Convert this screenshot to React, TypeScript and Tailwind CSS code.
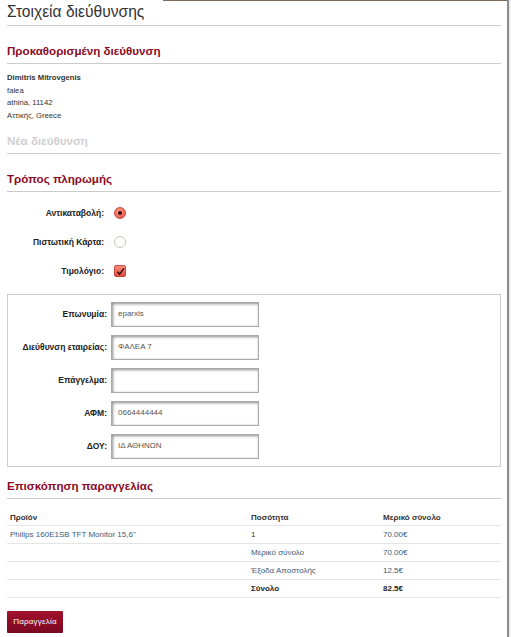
import React from "react";

const red = "text-[#8b0a24]";

function Heading({ children, muted }: { children: React.ReactNode; muted?: boolean }) {
  return (
    <div className="border-b border-[#cccccc] pb-[5px]">
      <h2 className={`text-[11.6px] font-bold leading-[14px] ${muted ? "text-[#cfcfcf]" : red}`}>{children}</h2>
    </div>
  );
}

function Field({ label, value }: { label: string; value: string }) {
  return (
    <div className="flex items-center h-[33px]">
      <label className="w-[103px] text-right pr-[4px] text-[8.5px] font-bold text-[#222]">{label}</label>
      <div className="w-[148px] h-[25px] border border-[#a9a9a9] shadow-[inset_1px_1px_3px_rgba(0,0,0,0.45)] bg-white flex items-center px-[6px] text-[8px] text-[#555]">
        {value}
      </div>
    </div>
  );
}

export default function App() {
  const rows = [
    { a: "Philips 160E1SB TFT Monitor 15,6\"", b: "1", c: "70.00€", bold: false },
    { a: "", b: "Μερικό σύνολο", c: "70.00€", bold: false },
    { a: "", b: "Έξοδα Αποστολής", c: "12.5€", bold: false },
    { a: "", b: "Σύνολο", c: "82.5€", bold: true },
  ];
  return (
    <div className="w-[511px] h-[637px] bg-white relative overflow-hidden" style={{ fontFamily: '"Liberation Sans", Arial, sans-serif' }}>
      <div className="absolute top-0 left-[163px] right-[3px] h-[1px] bg-[#7d6b55]" />
      <div className="absolute top-0 bottom-0 right-[2px] w-[2px] bg-[#8a8a8a]" />
      <div className="absolute top-0 bottom-0 right-0 w-[2px] bg-[#eeeeee]" />
      <div className="pl-[7px] pr-[10px] pt-[1px]">
        <div className="border-b border-[#cccccc] pb-[3px]">
          <h1 className="text-[15.6px] leading-[21px] text-[#333]">Στοιχεία διεύθυνσης</h1>
        </div>

        <div className="mt-[18px]">
          <Heading>Προκαθορισμένη διεύθυνση</Heading>
        </div>
        <div className="mt-[8px] text-[7.7px] leading-[12.7px] text-[#333]">
          <div className="font-bold">Dimitris Mitrovgenis</div>
          <div>falea</div>
          <div>athina, 11142</div>
          <div>Αττικής, Greece</div>
        </div>

        <div className="mt-[11px]">
          <Heading muted>Νέα διεύθυνση</Heading>
        </div>

        <div className="mt-[18px]">
          <Heading>Τρόπος πληρωμής</Heading>
        </div>

        <div className="mt-[7px] flex flex-col">
          {[
            { l: "Αντικαταβολή:", t: "radio-on" },
            { l: "Πιστωτική Κάρτα:", t: "radio-off" },
            { l: "Τιμολόγιο:", t: "check" },
          ].map((r) => (
            <div key={r.l} className="flex items-center h-[29px]">
              <span className="w-[97px] text-right text-[8.5px] font-bold text-[#222]">{r.l}</span>
              <span className="ml-[10px]">
                {r.t === "radio-on" && (
                  <span className="flex items-center justify-center w-[12px] h-[12px] rounded-full bg-[radial-gradient(circle_at_40%_35%,#ff9a8a,#e2483c)] border border-[#c94a3f]">
                    <span className="w-[4px] h-[4px] rounded-full bg-[#3a1010]" />
                  </span>
                )}
                {r.t === "radio-off" && (
                  <span className="block w-[12px] h-[12px] rounded-full bg-white border border-[#c9c5bd]" />
                )}
                {r.t === "check" && (
                  <span className="flex items-center justify-center w-[12px] h-[12px] rounded-[2px] bg-[linear-gradient(#ff8e80,#e2483c)] border border-[#c94a3f]">
                    <svg width="9" height="9" viewBox="0 0 10 10">
                      <path d="M1.5 5.2 L4 8 L8.8 1.5" fill="none" stroke="#2a0d0d" strokeWidth="1.6" />
                    </svg>
                  </span>
                )}
              </span>
            </div>
          ))}
        </div>

        <div className="mt-[8px] border border-[#cccccc] pt-[3px] pb-[3px]">
          <Field label="Επωνυμία:" value="eparxis" />
          <Field label="Διεύθυνση εταιρείας:" value="ΦΑΛΕΑ 7" />
          <Field label="Επάγγελμα:" value="" />
          <Field label="ΑΦΜ:" value="0664444444" />
          <Field label="ΔΟΥ:" value="ΙΔ ΑΘΗΝΩΝ" />
        </div>

        <div className="mt-[12px]">
          <Heading>Επισκόπηση παραγγελίας</Heading>
        </div>

        <table className="mt-[11px] w-full text-[8px] text-[#333] border-collapse">
          <thead>
            <tr className="border-b border-[#e5e5e5] h-[16px]">
              <th className="text-left font-bold pl-[3px] w-[244px]">Προϊόν</th>
              <th className="text-left font-bold w-[132px]">Ποσότητα</th>
              <th className="text-left font-bold">Μερικό σύνολο</th>
            </tr>
          </thead>
          <tbody>
            {rows.map((r, i) => (
              <tr key={i} className="border-b border-[#e5e5e5] h-[18px]">
                <td className="pl-[3px] text-[#3c5a78]">{r.a}</td>
                <td className={r.bold ? "font-bold text-[#222]" : i === 0 ? "" : "text-[#3c5a78]"}>{r.b}</td>
                <td className={r.bold ? "font-bold text-[#222]" : "text-[#3c5a78]"}>{r.c}</td>
              </tr>
            ))}
          </tbody>
        </table>

        <button className="mt-[13px] h-[22px] w-[56px] bg-[linear-gradient(#a3112e,#7a0820)] text-white text-[8px] tracking-[0.2px] rounded-[1px]">
          Παραγγελία
        </button>
      </div>
    </div>
  );
}
